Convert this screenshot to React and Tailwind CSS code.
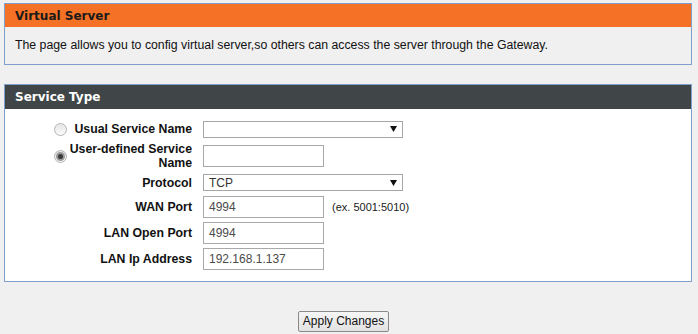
import React from "react";

const Arrow = () => (
  <svg width="7" height="6" viewBox="0 0 7 6" className="shrink-0">
    <path d="M0 0 H7 L3.5 6 Z" fill="#111" />
  </svg>
);

const Select = ({ value }) => (
  <div className="flex items-center justify-between w-[200px] h-[17px] border border-[#a6a6a6] bg-white pl-[5px] pr-[5px] text-[12px] text-[#333] leading-none">
    <span>{value}</span>
    <Arrow />
  </div>
);

const Input = ({ value }) => (
  <div className="flex items-center w-[121px] h-[22px] border border-[#a9a9a9] bg-white pl-[5px] text-[12px] text-[#4b4b4b] leading-none">
    {value}
  </div>
);

const Radio = ({ checked }) => (
  <div className="w-[13px] h-[13px] rounded-full border border-[#b4b4b4] bg-gradient-to-b from-[#e6e6e6] to-[#fafafa] flex items-center justify-center shrink-0">
    {checked && <div className="w-[5px] h-[5px] rounded-full bg-[#3a3a3a] ring-2 ring-[#9a9a9a]" />}
  </div>
);

const Row = ({ h, label, radio, children }) => (
  <div className={`flex items-center ${h}`}>
    <div className="w-[187px] flex items-center shrink-0">
      <div className="w-[49px] shrink-0" />
      <div className="w-[14px] shrink-0">{radio}</div>
      <div className="w-[124px] text-right font-bold text-[12.3px] leading-[14px] text-[#111]">{label}</div>
    </div>
    <div className="w-[11px] shrink-0" />
    {children}
  </div>
);

export default function App() {
  return (
    <div className="w-[698px] h-[334px] bg-[#f0f0f0] overflow-hidden pt-[3px] font-['Liberation_Sans',Arial,sans-serif] text-black">
      <div className="ml-[4px] w-[688px] border border-[#7fa0cd]">
        <div className="h-[23px] bg-[#f47125] flex items-center pl-[10px] font-['DejaVu_Sans',sans-serif] font-bold text-[12px] text-[#1a1a1a]">
          Virtual Server
        </div>
        <div className="h-[37px] flex items-center pl-[10px] text-[12.3px] text-[#111]">
          The page allows you to config virtual server,so others can access the server through the Gateway.
        </div>
      </div>

      <div className="ml-[4px] mt-[19px] w-[688px] border border-[#7fa0cd] bg-white">
        <div className="h-[24px] bg-[#404647] flex items-center pl-[10px] font-['DejaVu_Sans',sans-serif] font-bold text-[12px] text-white">
          Service Type
        </div>
        <div className="pt-[8px] pb-[9px]">
          <Row h="h-[24px]" label="Usual Service Name" radio={<Radio />}>
            <Select value="" />
          </Row>
          <Row h="h-[30px]" label="User-defined Service Name" radio={<Radio checked />}>
            <Input value="" />
          </Row>
          <Row h="h-[23px]" label="Protocol">
            <Select value="TCP" />
          </Row>
          <Row h="h-[26px]" label="WAN Port">
            <Input value="4994" />
            <span className="ml-[8px] text-[11px] text-[#222]">(ex. 5001:5010)</span>
          </Row>
          <Row h="h-[26px]" label="LAN Open Port">
            <Input value="4994" />
          </Row>
          <Row h="h-[26px]" label="LAN Ip Address">
            <Input value="192.168.1.137" />
          </Row>
        </div>
      </div>

      <div className="pl-[298px] mt-[26px]">
        <button className="w-[91px] h-[21px] border border-[#8a8a8a] rounded-[2px] bg-gradient-to-b from-[#f6f6f6] to-[#e2e2e2] text-[12px] text-[#111] leading-none">
          Apply Changes
        </button>
      </div>
    </div>
  );
}
